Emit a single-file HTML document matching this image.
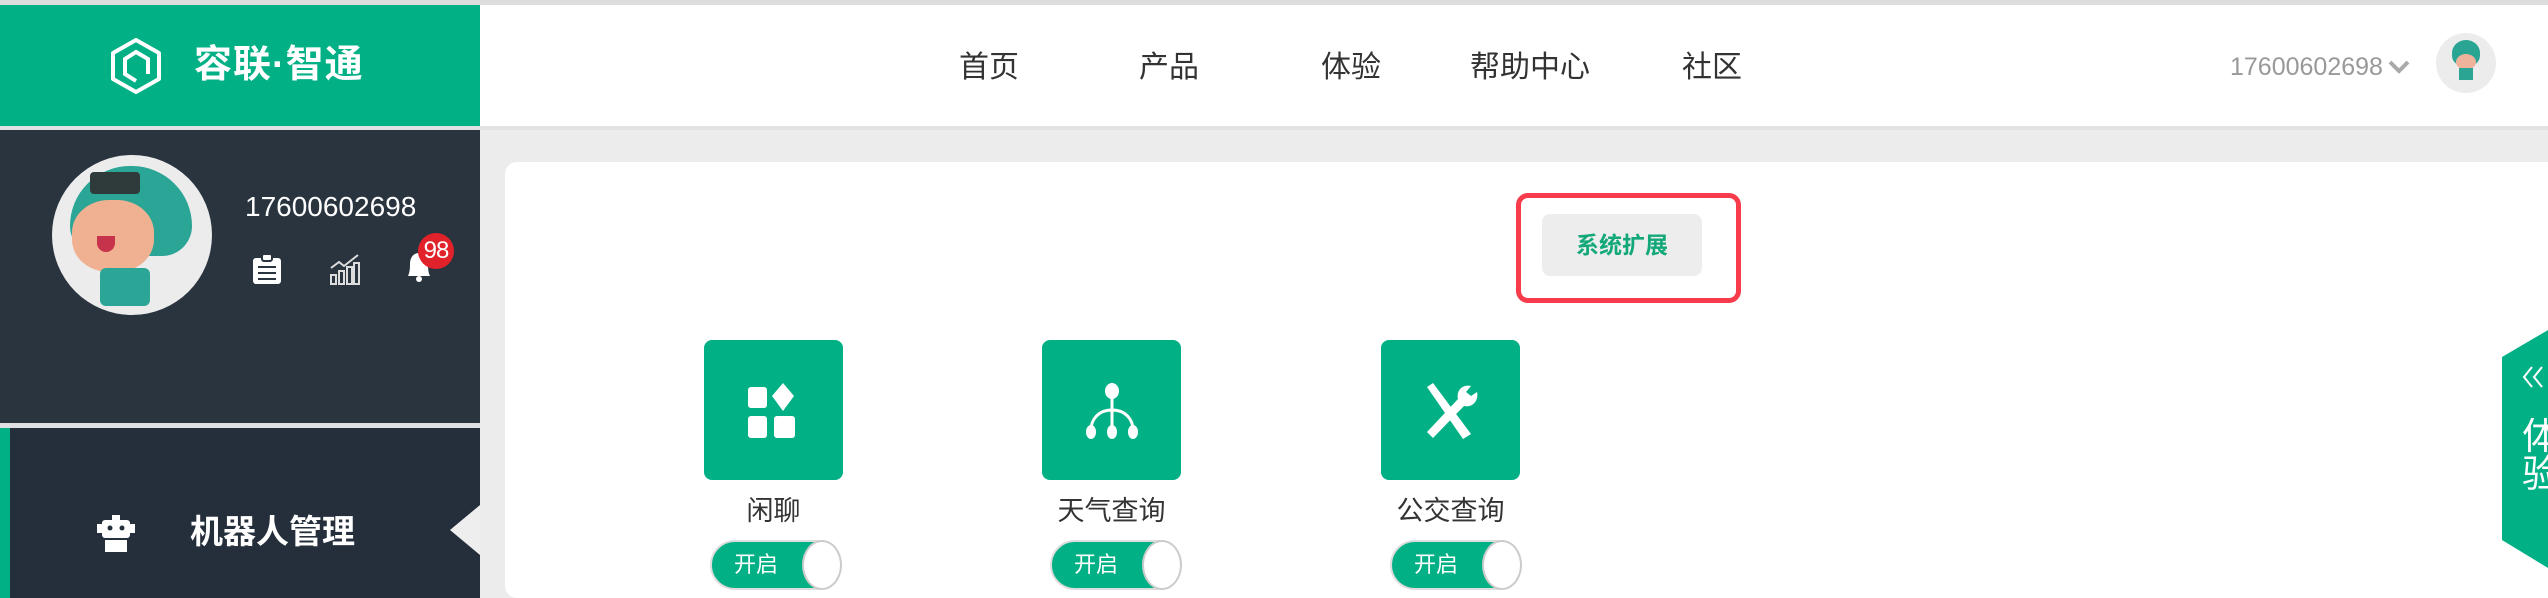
<!DOCTYPE html>
<html><head><meta charset="utf-8"><style>
*{margin:0;padding:0;box-sizing:border-box}
body{width:2548px;height:598px;overflow:hidden;background:#ececec;font-family:"Liberation Sans","Noto Sans CJK SC",sans-serif;position:relative}
.a{position:absolute}
.nav{position:absolute;top:50px;font-size:30px;color:#333;line-height:36px}
.tile{position:absolute;top:340px;width:139px;height:140px;background:#02b085;border-radius:8px}
.lbl{position:absolute;top:494px;width:139px;text-align:center;font-size:27px;color:#333;line-height:34px}
.tg{position:absolute;top:540px;width:132px;height:50px;background:#02b085;border-radius:25px;border:2px solid #ddd}
.tg span{position:absolute;left:22px;top:8px;font-size:22px;color:#fff;line-height:30px}
.tg i{position:absolute;right:-2px;top:-2px;width:40px;height:50px;border-radius:20px/25px;background:#fff;border:2px solid #ccc}
</style></head><body>
<div class="a" style="left:0;top:0;width:2548px;height:5px;background:#ddd"></div>
<div class="a" style="left:0;top:5px;width:2548px;height:121px;background:#fff"></div>
<div class="a" style="left:0;top:126px;width:2548px;height:4px;background:#e2e2e2"></div>
<div class="a" style="left:0;top:5px;width:480px;height:121px;background:#02b085"></div>
<svg class="a" style="left:108px;top:37px" width="56" height="58" viewBox="0 0 56 58"><path d="M28 3 L51 16 L51 42 L28 55 L5 42 L5 16 Z" fill="none" stroke="#fff" stroke-width="4" stroke-linejoin="round"/><path d="M40 37 L40 22 L28 15 L17 22 L17 37 L28 44" fill="none" stroke="#fff" stroke-width="4"/></svg>
<div class="a" style="left:194px;top:43px;font-size:38px;color:#fff;font-weight:bold;line-height:44px;letter-spacing:1px">容联·智通</div>
<div class="nav" style="left:959px">首页</div>
<div class="nav" style="left:1139px">产品</div>
<div class="nav" style="left:1321px">体验</div>
<div class="nav" style="left:1470px">帮助中心</div>
<div class="nav" style="left:1682px">社区</div>
<div class="a" style="left:2230px;top:52px;font-size:25px;color:#999;line-height:30px">17600602698</div>
<svg class="a" style="left:2388px;top:60px" width="22" height="14" viewBox="0 0 22 14"><path d="M2 2 L11 11 L20 2" fill="none" stroke="#aaa" stroke-width="4"/></svg>
<div class="a" style="left:2436px;top:33px;width:60px;height:60px;border-radius:50%;background:#ececec"></div>
<div class="a" style="left:2452px;top:40px;width:28px;height:26px;border-radius:50% 50% 40% 40%;background:#2aa493"></div>
<div class="a" style="left:2456px;top:54px;width:20px;height:16px;border-radius:50%;background:#efb39c"></div>
<div class="a" style="left:2459px;top:68px;width:14px;height:12px;background:#2aa493"></div>
<!-- sidebar -->
<div class="a" style="left:0;top:130px;width:480px;height:293px;background:#29343f"></div>
<div class="a" style="left:0;top:423px;width:480px;height:5px;background:#e0e0e0"></div>
<div class="a" style="left:0;top:428px;width:480px;height:170px;background:#252e3b"></div>
<div class="a" style="left:0;top:428px;width:10px;height:170px;background:#02b085"></div>
<div class="a" style="left:52px;top:155px;width:160px;height:160px;border-radius:50%;background:#ececec"></div>
<div class="a" style="left:70px;top:166px;width:122px;height:90px;border-radius:60px 60px 30px 30px;background:#2ba595"></div>
<div class="a" style="left:90px;top:172px;width:50px;height:22px;background:#2f3a3a;border-radius:4px"></div>
<div class="a" style="left:72px;top:200px;width:82px;height:72px;border-radius:45%;background:#f0b092"></div>
<div class="a" style="left:97px;top:236px;width:18px;height:16px;border-radius:0 0 10px 10px;background:#c7334a"></div>
<div class="a" style="left:100px;top:268px;width:50px;height:38px;background:#2ba595;border-radius:6px"></div>
<div class="a" style="left:245px;top:190px;font-size:28px;color:#fff;line-height:34px">17600602698</div>
<svg class="a" style="left:251px;top:253px" width="32" height="32" viewBox="0 0 32 32"><rect x="2" y="5" width="28" height="26" rx="3" fill="#fff"/><rect x="11" y="1" width="10" height="7" rx="2" fill="#fff" stroke="#29343f" stroke-width="2"/><path d="M7 14H25M7 20H25M7 26H25" stroke="#29343f" stroke-width="2"/></svg>
<svg class="a" style="left:330px;top:253px" width="30" height="32" viewBox="0 0 30 32"><path d="M1 15 L9 9 L14 13 L28 2" fill="none" stroke="#ddd" stroke-width="2"/><rect x="1" y="22" width="5" height="9" fill="none" stroke="#ddd" stroke-width="2"/><rect x="9" y="18" width="5" height="13" fill="none" stroke="#ddd" stroke-width="2"/><rect x="17" y="14" width="5" height="17" fill="none" stroke="#ddd" stroke-width="2"/><rect x="24" y="10" width="5" height="21" fill="none" stroke="#ddd" stroke-width="2"/></svg>
<svg class="a" style="left:404px;top:250px" width="30" height="34" viewBox="0 0 30 34"><path d="M4 26 C6 22 6 17 6 14 C6 7 10 3 15 3 C20 3 24 7 24 14 C24 17 24 22 26 26 Z" fill="#fff"/><circle cx="15" cy="29" r="3" fill="#fff"/></svg>
<div class="a" style="left:418px;top:233px;width:36px;height:36px;border-radius:50%;background:#e2222b;color:#fff;font-size:24px;line-height:36px;text-align:center;letter-spacing:-1px">98</div>
<svg class="a" style="left:97px;top:515px" width="38" height="37" viewBox="0 0 38 37"><rect x="15" y="0" width="8" height="5" fill="#fff"/><rect x="5" y="5" width="28" height="18" rx="3" fill="#fff"/><rect x="0" y="9" width="5" height="9" fill="#fff"/><rect x="33" y="9" width="5" height="9" fill="#fff"/><circle cx="13" cy="13" r="2.5" fill="#252e3b"/><circle cx="25" cy="13" r="2.5" fill="#252e3b"/><rect x="8" y="25" width="22" height="12" fill="#fff"/></svg>
<div class="a" style="left:190px;top:512px;font-size:33px;font-weight:bold;color:#fff;line-height:40px">机器人管理</div>
<div class="a" style="left:450px;top:505px;width:0;height:0;border-top:25px solid transparent;border-bottom:25px solid transparent;border-right:30px solid #eee"></div>
<!-- main card -->
<div class="a" style="left:505px;top:162px;width:2060px;height:436px;background:#fff;border-radius:12px"></div>
<div class="a" style="left:1516px;top:193px;width:225px;height:110px;border:5px solid #f93c4c;border-radius:12px"></div>
<div class="a" style="left:1542px;top:214px;width:160px;height:62px;background:#ededed;border-radius:8px;text-align:center;line-height:62px;font-size:23px;font-weight:bold;color:#12a87a">系统扩展</div>
<div class="tile" style="left:704px"><svg style="position:absolute;left:42px;top:42px" width="56" height="56" viewBox="0 0 56 56"><rect x="2" y="5" width="19" height="21" rx="3" fill="#fff"/><path d="M37 1 L48 14 L37 29 L26 14 Z" fill="#fff"/><rect x="2" y="34" width="19" height="22" rx="3" fill="#fff"/><rect x="28" y="34" width="21" height="22" rx="3" fill="#fff"/></svg></div>
<div class="tile" style="left:1042px"><svg style="position:absolute;left:42px;top:42px" width="56" height="60" viewBox="0 0 56 60"><ellipse cx="28" cy="9" rx="7" ry="8" fill="#fff"/><path d="M28 16 V48 M28 28 C14 28 7 38 7 48 M28 28 C42 28 49 38 49 48" fill="none" stroke="#fff" stroke-width="3"/><ellipse cx="7" cy="50" rx="5" ry="7" fill="#fff"/><ellipse cx="28" cy="50" rx="5" ry="7" fill="#fff"/><ellipse cx="49" cy="50" rx="5" ry="7" fill="#fff"/></svg></div>
<div class="tile" style="left:1381px"><svg style="position:absolute;left:42px;top:42px" width="56" height="60" viewBox="0 0 56 60"><path d="M4 5 L10 1 L48 52 L40 57 Z" fill="#fff"/><path d="M48 4 C40 2 33 8 35 17 L4 50 L10 56 L41 24 C50 26 56 18 54 10 L48 14 L43 10 Z" fill="#fff"/></svg></div>
<div class="lbl" style="left:704px">闲聊</div>
<div class="lbl" style="left:1042px">天气查询</div>
<div class="lbl" style="left:1381px">公交查询</div>
<div class="tg" style="left:710px"><span>开启</span><i></i></div>
<div class="tg" style="left:1050px"><span>开启</span><i></i></div>
<div class="tg" style="left:1390px"><span>开启</span><i></i></div>
<!-- right tab -->
<svg class="a" style="left:2502px;top:330px" width="46" height="238" viewBox="0 0 46 238"><path d="M0 27 L46 0 L46 238 L0 210 Z" fill="#02b085"/><path d="M30 37 L22 47 L30 57 M40 37 L32 47 L40 57" fill="none" stroke="#fff" stroke-width="2"/></svg>
<div class="a" style="left:2522px;top:418px;font-size:38px;color:#fff;line-height:38px;width:26px;overflow:hidden">体<br>验</div>
</body></html>
